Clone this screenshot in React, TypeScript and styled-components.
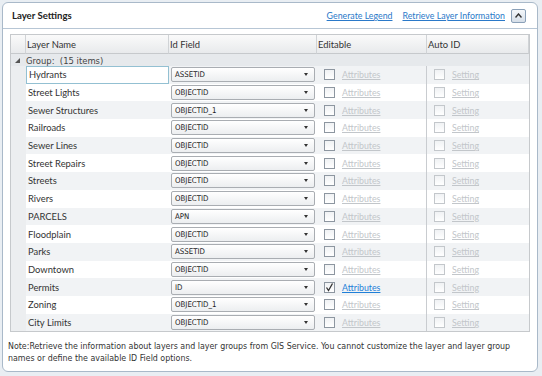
import styled, { createGlobalStyle } from "styled-components";

const GlobalStyle = createGlobalStyle`
    html, body {
        margin: 0;
        padding: 0;
        background: #e9eef3;
    }
    body {
        font-family: Lato, "Noto Sans", "DejaVu Sans", sans-serif;
        font-size: 9.4px;
        color: #333;
    }
`;

const smallFont = `"DejaVu Sans Condensed", "DejaVu Sans", sans-serif`;

interface Layer {
    name: string;
    idField: string;
    editable?: boolean;
}

const layers: Layer[] = [
    {name: "Hydrants", idField: "ASSETID"},
    {name: "Street Lights", idField: "OBJECTID"},
    {name: "Sewer Structures", idField: "OBJECTID_1"},
    {name: "Railroads", idField: "OBJECTID"},
    {name: "Sewer Lines", idField: "OBJECTID"},
    {name: "Street Repairs", idField: "OBJECTID"},
    {name: "Streets", idField: "OBJECTID"},
    {name: "Rivers", idField: "OBJECTID"},
    {name: "PARCELS", idField: "APN"},
    {name: "Floodplain", idField: "OBJECTID"},
    {name: "Parks", idField: "ASSETID"},
    {name: "Downtown", idField: "OBJECTID"},
    {name: "Permits", idField: "ID", editable: true},
    {name: "Zoning", idField: "OBJECTID_1"},
    {name: "City Limits", idField: "OBJECTID"},
];

const Panel = styled.div`
    margin: 2px;
    width: 536px;
    height: 370px;
    box-sizing: border-box;
    background: #fff;
    border: 1px solid #a9b9c9;
    border-radius: 6px;
    display: flex;
    flex-direction: column;
`;

const Header = styled.div`
    display: flex;
    align-items: center;
    height: 25px;
    padding: 0 11px 0 9px;
    border-bottom: 1px solid #b7c6d5;
`;

const Title = styled.div`
    font-weight: bold;
    font-size: 9.6px;
    color: #222;
    flex: 1;
`;

const HeadLink = styled.a`
    color: #2a79c9;
    font-size: 8.8px;
    text-decoration: underline;
    margin-left: 10px;
    cursor: pointer;
`;

const CollapseButton = styled.div`
    width: 13px;
    height: 12px;
    margin-left: 6px;
    border: 1px solid #8aa0b8;
    border-radius: 2px;
    background: linear-gradient(#f4f7fa, #d5dee8);
    display: flex;
    align-items: center;
    justify-content: center;
`;

const Grid = styled.div`
    margin: 5px 7px 0 7px;
    border: 1px solid #c6c9cc;
    display: grid;
    grid-template-columns: 15px 143px 148px 110px 1fr;
`;

const HeadCell = styled.div`
    height: 18px;
    display: flex;
    align-items: center;
    padding-left: 1px;
    background: linear-gradient(#fafafa, #e8eaec);
    border-right: 1px solid #d0d3d6;
    border-bottom: 1px solid #c6c9cc;
    color: #333;
    &:last-child {
        border-right: none;
    }
`;

const GroupRow = styled.div`
    grid-column: 1 / -1;
    height: 12px;
    display: flex;
    align-items: center;
    padding-left: 4px;
    background: #e6e9ec;
    font-family: ${smallFont};
    font-size: 9.4px;
    color: #444;
    white-space: pre;
`;

const Indent = styled.div`
    height: 17.7px;
    background: #eceef0;
`;

const Cell = styled.div<{ $alt: boolean; $divider?: boolean; $focus?: boolean }>`
    height: 17.7px;
    box-sizing: border-box;
    display: flex;
    align-items: center;
    padding-left: 2px;
    background: ${p => (p.$alt ? "#f1f3f5" : "#fff")};
    border-right: ${p => (p.$divider ? "1px solid #c9ccd0" : "none")};
    ${p => p.$focus && "border: 1px solid #93c0d2; background: #fff;"}
`;

const Combo = styled.div`
    flex: 1;
    margin-right: 2px;
    height: 15px;
    box-sizing: border-box;
    border: 1px solid #a9adb2;
    border-radius: 2px;
    background: linear-gradient(#ffffff, #eceef0);
    display: flex;
    align-items: center;
    padding: 0 6px 0 3px;
    font-family: ${smallFont};
    font-size: 7.8px;
    color: #222;
`;

const ComboText = styled.span`
    flex: 1;
`;

const Arrow = styled.span`
    width: 0;
    height: 0;
    border-left: 2.5px solid transparent;
    border-right: 2.5px solid transparent;
    border-top: 3px solid #333;
`;

const Check = styled.div<{ $dim?: boolean }>`
    width: 9px;
    height: 9px;
    border: 1px solid ${p => (p.$dim ? "#c3c7cb" : "#8d96a0")};
    background: linear-gradient(#f0f2f4, #fff);
    margin: 0 7px 0 5px;
    display: flex;
    align-items: center;
    justify-content: center;
`;

const GridLink = styled.a<{ $active?: boolean }>`
    color: ${p => (p.$active ? "#1f7fd8" : "#c2c6ca")};
    font-size: 8.8px;
    text-decoration: underline;
`;

const Note = styled.div`
    padding: 8px 6px 0 5px;
    font-family: ${smallFont};
    font-size: 8.8px;
    line-height: 12px;
    color: #333;
`;

function Tick() {
    return (
        <svg width="9" height="9" viewBox="0 0 9 9">
            <path d="M1.5 4.5 L3.5 7.5 L7.5 0.5" stroke="#333" strokeWidth="1.3" fill="none"/>
        </svg>
    );
}

export default function App() {
    return (
        <>
            <GlobalStyle/>
            <Panel>
                <Header>
                    <Title>Layer Settings</Title>
                    <HeadLink>Generate Legend</HeadLink>
                    <HeadLink>Retrieve Layer Information</HeadLink>
                    <CollapseButton>
                        <svg width="7" height="5" viewBox="0 0 7 5">
                            <path d="M0.5 4.5 L3.5 1 L6.5 4.5" stroke="#333" strokeWidth="1.4" fill="none"/>
                        </svg>
                    </CollapseButton>
                </Header>
                <Grid>
                    <HeadCell/>
                    <HeadCell>Layer Name</HeadCell>
                    <HeadCell>Id Field</HeadCell>
                    <HeadCell>Editable</HeadCell>
                    <HeadCell>Auto ID</HeadCell>
                    <GroupRow>
                        <svg width="5" height="5" viewBox="0 0 5 5" style={{marginRight: 6}}>
                            <path d="M5 0 L5 5 L0 5 Z" fill="#555"/>
                        </svg>
                        {"Group:  (15 items)"}
                    </GroupRow>
                    {layers.map((layer, i) => {
                        const alt = i % 2 === 0;
                        return [
                            <Indent key={layer.name + "i"}/>,
                            <Cell key={layer.name + "n"} $alt={alt} $focus={i === 0}>{layer.name}</Cell>,
                            <Cell key={layer.name + "f"} $alt={alt}>
                                <Combo>
                                    <ComboText>{layer.idField}</ComboText>
                                    <Arrow/>
                                </Combo>
                            </Cell>,
                            <Cell key={layer.name + "e"} $alt={alt} $divider>
                                <Check>{layer.editable && <Tick/>}</Check>
                                <GridLink $active={layer.editable}>Attributes</GridLink>
                            </Cell>,
                            <Cell key={layer.name + "a"} $alt={alt}>
                                <Check $dim/>
                                <GridLink>Setting</GridLink>
                            </Cell>,
                        ];
                    })}
                </Grid>
                <Note>
                    Note:Retrieve the information about layers and layer groups from GIS Service. You cannot customize the layer and layer group names or define the available ID Field options.
                </Note>
            </Panel>
        </>
    );
}
